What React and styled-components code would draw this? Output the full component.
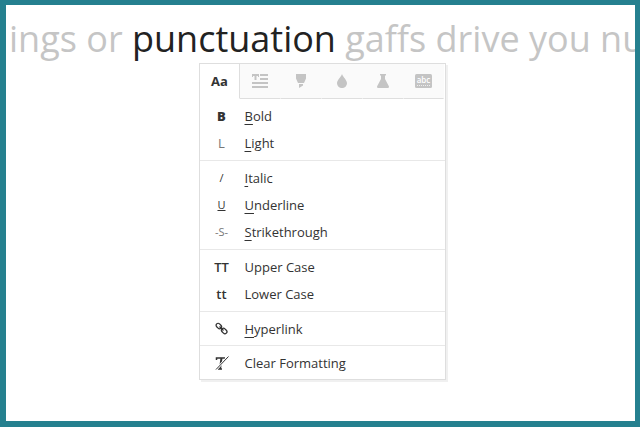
import { useState } from "react";
import styled, { createGlobalStyle } from "styled-components";

const GlobalStyle = createGlobalStyle`
  * {
    box-sizing: border-box;
  }
  body {
    margin: 0;
    background-color: #25808f;
    font-family: "Open Sans", "Noto Sans", sans-serif;
  }
`;

const LinesIcon = () => (
  <svg width="16" height="14" viewBox="0 0 16 14" fill="currentColor">
    <path d="M0 0h7v3H6V2H4.500v4h-2V2H1v1H0zM8 0h8v2H8zM8 4h8v2H8zM0 8h16v2H0zM0 12h16v2H0z" />
  </svg>
);

const MarkerIcon = () => (
  <svg width="12" height="14" viewBox="0 0 12 14" fill="currentColor">
    <path d="M1 0h10v4.500L9 9H3L1 4.500zM4 10h4v1.500l-4 2.500z" />
  </svg>
);

const DropIcon = () => (
  <svg width="10" height="14" viewBox="0 0 10 14" fill="currentColor">
    <path d="M5 0C6 3 10 6 10 9.300A4.900 4.700 0 0 1 0 9.300C0 6 4 3 5 0z" />
  </svg>
);

const FlaskIcon = () => (
  <svg width="12" height="14" viewBox="0 0 12 14" fill="currentColor">
    <path d="M3 0h6v1.500H8V5l4 7.500Q12 14 11 14H1Q0 14 0 12.500L4 5V1.500H3z" />
  </svg>
);

const SpellIcon = () => (
  <svg width="17" height="14" viewBox="0 0 17 14">
    <rect width="17" height="14" rx="1.500" fill="currentColor" />
    <text x="8.500" y="9" fontSize="8" fontWeight="600" textAnchor="middle" fill="#fff">
      abc
    </text>
    <path d="M2 11.500h13" stroke="#eee" strokeDasharray="1 1" />
  </svg>
);

const LinkIcon = () => (
  <svg width="13" height="13" viewBox="0 0 13 13" fill="none" stroke="currentColor" strokeWidth="1.300">
    <rect x="0.800" y="2" width="6" height="4" rx="2" transform="rotate(45 3.800 4)" />
    <rect x="6.200" y="7" width="6" height="4" rx="2" transform="rotate(45 9.200 9)" />
    <path d="M4.500 4.500l4 4" />
  </svg>
);

const ClearIcon = () => (
  <svg width="14" height="14" viewBox="0 0 14 14" fill="none" stroke="currentColor">
    <path d="M1.500 4V2H10M3 13h4" strokeWidth="1.500" />
    <path d="M6.500 2L5 13" strokeWidth="2" />
    <path d="M13.500 0.500L1 13.500" stroke="#fff" strokeWidth="2.500" />
    <path d="M13.500 0.500L1 13.500" />
  </svg>
);

const App = () => {
  const [activeTab, setActiveTab] = useState("text");

  return (
    <>
      <GlobalStyle />
      <Frame>
        <Page>
          <Sentence>
            ings or <mark>punctuation</mark> gaffs drive you nuts
          </Sentence>
          <Popup>
            <Tabs role="tablist">
              {tabs.map((tab) => (
                <Tab
                  key={tab.id}
                  role="tab"
                  aria-label={tab.label}
                  aria-selected={tab.id === activeTab}
                  $active={tab.id === activeTab}
                  onClick={() => setActiveTab(tab.id)}
                >
                  {tab.icon}
                </Tab>
              ))}
            </Tabs>
            {groups.map((group) => (
              <Group key={group[0].name} $single={group.length === 1}>
                {group.map((item) => (
                  <Item key={item.name}>
                    <IconBox>{item.icon}</IconBox>
                    <Label>
                      {item.hotkey ? <Hotkey>{item.name[0]}</Hotkey> : item.name[0]}
                      {item.name.slice(1)}
                    </Label>
                  </Item>
                ))}
              </Group>
            ))}
          </Popup>
        </Page>
      </Frame>
    </>
  );
};

export default App;

const Frame = styled.div`
  display: flex;
  min-height: 100vh;
  padding: 5px 5px 6px 6px;
`;

const Page = styled.main`
  flex: 1;
  min-width: 0;
  overflow: hidden;
  padding: 0 0 40px 3px;
  background-color: #fff;
`;

const Sentence = styled.p`
  margin: 0;
  padding-top: 8px;
  height: 58px;
  white-space: nowrap;
  font-size: 36px;
  line-height: 52px;
  color: #c5c5c5;

  mark {
    background: none;
    color: #222;
  }
`;

const Popup = styled.div`
  width: 247px;
  margin: 0 auto;
  border: 1px solid #dedede;
  background-color: #fff;
  box-shadow: 2px 2px 0 #f0f0f0;
`;

const Tabs = styled.div`
  display: flex;
  height: 35px;
`;

const Tab = styled.button`
  flex: 1;
  display: flex;
  align-items: center;
  justify-content: center;
  padding: 0;
  border: 0;
  border-right: 1px solid ${(props) => (props.$active ? "#dedede" : "transparent")};
  border-bottom: 1px solid ${(props) => (props.$active ? "transparent" : "#dedede")};
  background-color: ${(props) => (props.$active ? "#fff" : "#fafafa")};
  color: ${(props) => (props.$active ? "#333" : "#c4c4c4")};
  font: bold 13px "Open Sans", sans-serif;
  cursor: pointer;
`;

const Group = styled.div`
  display: flex;
  flex-direction: column;
  padding: 3px 0 ${(props) => (props.$single ? "3px" : "4px")};

  & + & {
    border-top: 1px solid #e8e8e8;
  }
`;

const Item = styled.button`
  display: flex;
  align-items: center;
  height: 27px;
  padding: 0 12px;
  border: 0;
  background: none;
  color: #333;
  font: 13px "Open Sans", sans-serif;
  cursor: pointer;

  &:hover {
    background-color: #f5f5f5;
  }
`;

const IconBox = styled.span`
  display: flex;
  justify-content: center;
  width: 20px;
  margin-right: 13px;
`;

const Label = styled.span`
  line-height: 20px;
`;

const Hotkey = styled.span`
  text-decoration: underline;
  text-underline-offset: 3px;
`;

const Glyph = styled.span`
  font-size: ${(props) => (props.$small ? "11px" : "13px")};
  font-weight: ${(props) => props.$weight || 400};
  color: ${(props) => (props.$light ? "#777" : "#333")};
  text-decoration: ${(props) => (props.$underline ? "underline" : "none")};
`;

const tabs = [
  { id: "text", label: "Text style", icon: "Aa" },
  { id: "paragraph", label: "Paragraph", icon: <LinesIcon /> },
  { id: "highlight", label: "Highlight", icon: <MarkerIcon /> },
  { id: "color", label: "Color", icon: <DropIcon /> },
  { id: "lab", label: "Lab", icon: <FlaskIcon /> },
  { id: "spelling", label: "Spelling", icon: <SpellIcon /> },
];

const groups = [
  [
    { name: "Bold", hotkey: true, icon: <Glyph $weight={800}>B</Glyph> },
    { name: "Light", hotkey: true, icon: <Glyph $light>L</Glyph> },
  ],
  [
    { name: "Italic", hotkey: true, icon: <Glyph $small>/</Glyph> },
    { name: "Underline", hotkey: true, icon: <Glyph $small $underline>U</Glyph> },
    { name: "Strikethrough", hotkey: true, icon: <Glyph $small $light>-S-</Glyph> },
  ],
  [
    { name: "Upper Case", icon: <Glyph $weight={600}>TT</Glyph> },
    { name: "Lower Case", icon: <Glyph $weight={600}>tt</Glyph> },
  ],
  [{ name: "Hyperlink", hotkey: true, icon: <LinkIcon /> }],
  [{ name: "Clear Formatting", icon: <ClearIcon /> }],
];
